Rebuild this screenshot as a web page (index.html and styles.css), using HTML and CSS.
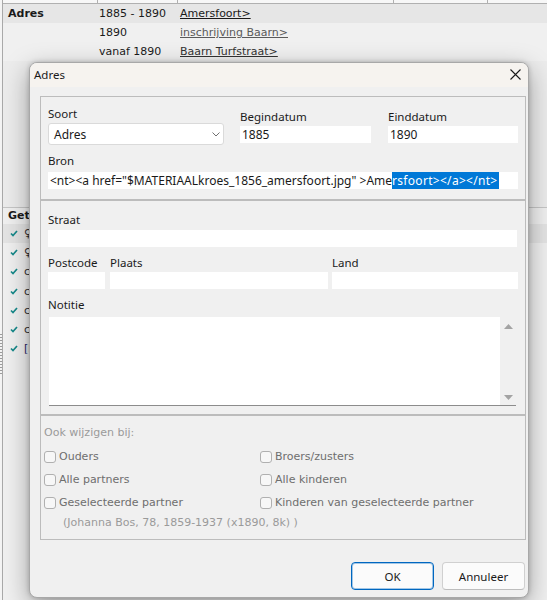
FILE: index.html
```html
<!DOCTYPE html>
<html>
<head>
<meta charset="utf-8">
<title>Adres</title>
<link rel="stylesheet" href="styles.css">
</head>
<body>
<div class="grip"><i></i></div>
<div class="app">
  <div class="hdr"><span class="hc h1"></span><span class="hc h2"></span><span class="hc h3"></span><span class="hc h4"></span></div>
  <div class="row sel"><span class="c1 b">Adres</span><span class="c2">1885 - 1890</span><span class="c3"><span class="lk">Amersfoort&gt;</span></span></div>
  <div class="row"><span class="c1"></span><span class="c2">1890</span><span class="c3"><span class="lk grey">inschrijving Baarn&gt;</span></span></div>
  <div class="row"><span class="c1"></span><span class="c2">vanaf 1890</span><span class="c3"><span class="lk mid">Baarn Turfstraat&gt;</span></span></div>
  <div class="gap"></div>
  <div class="sect">Get</div>
  <div class="list">
    <div class="li first"><svg class="ck" width="8" height="7" viewBox="0 0 8 7"><path d="M1 3.5 L3 5.5 L7 1" fill="none" stroke="#16898a" stroke-width="1.7"/></svg><span class="g">♀</span></div>
    <div class="li"><svg class="ck" width="8" height="7" viewBox="0 0 8 7"><path d="M1 3.5 L3 5.5 L7 1" fill="none" stroke="#16898a" stroke-width="1.7"/></svg><span class="g">♀</span></div>
    <div class="li"><svg class="ck" width="8" height="7" viewBox="0 0 8 7"><path d="M1 3.5 L3 5.5 L7 1" fill="none" stroke="#16898a" stroke-width="1.7"/></svg><span class="g">c</span></div>
    <div class="li"><svg class="ck" width="8" height="7" viewBox="0 0 8 7"><path d="M1 3.5 L3 5.5 L7 1" fill="none" stroke="#16898a" stroke-width="1.7"/></svg><span class="g">c</span></div>
    <div class="li"><svg class="ck" width="8" height="7" viewBox="0 0 8 7"><path d="M1 3.5 L3 5.5 L7 1" fill="none" stroke="#16898a" stroke-width="1.7"/></svg><span class="g">c</span></div>
    <div class="li"><svg class="ck" width="8" height="7" viewBox="0 0 8 7"><path d="M1 3.5 L3 5.5 L7 1" fill="none" stroke="#16898a" stroke-width="1.7"/></svg><span class="g">c</span></div>
    <div class="li"><svg class="ck" width="8" height="7" viewBox="0 0 8 7"><path d="M1 3.5 L3 5.5 L7 1" fill="none" stroke="#16898a" stroke-width="1.7"/></svg><span class="g br">[l</span></div>
  </div>
</div>

<div class="dlg">
  <div class="tbar">
    <span class="ttl">Adres</span>
    <svg class="x" width="11" height="11" viewBox="0 0 11 11"><path d="M0.5 0.5 L10.5 10.5 M10.5 0.5 L0.5 10.5" stroke="#1a1a1a" stroke-width="1.1"/></svg>
  </div>
  <div class="dbody">
    <div class="box b1">
      <div class="r1">
        <div class="fld soort">
          <div class="lbl">Soort</div>
          <div class="combo"><span>Adres</span><svg width="8" height="5" viewBox="0 0 8 5"><path d="M0.5 0.5 L4 4 L7.5 0.5" fill="none" stroke="#707070" stroke-width="1"/></svg></div>
        </div>
        <div class="fld date">
          <div class="lbl">Begindatum</div>
          <div class="inp">1885</div>
        </div>
        <div class="fld date d2">
          <div class="lbl">Einddatum</div>
          <div class="inp">1890</div>
        </div>
      </div>
      <div class="lbl bron-l">Bron</div>
      <div class="inp bron">&lt;nt&gt;&lt;a href="$MATERIAALkroes_1856_amersfoort.jpg" &gt;Ame<span class="hl">rsfoort&gt;&lt;/a&gt;&lt;/nt&gt;</span></div>
    </div>

    <div class="box b2">
      <div class="lbl">Straat</div>
      <div class="inp straat"></div>
      <div class="r2">
        <div class="fld pc"><div class="lbl">Postcode</div><div class="inp"></div></div>
        <div class="fld pl"><div class="lbl">Plaats</div><div class="inp"></div></div>
        <div class="fld ld"><div class="lbl">Land</div><div class="inp"></div></div>
      </div>
      <div class="lbl not-l">Notitie</div>
      <div class="memo">
        <div class="memo-txt"></div>
        <div class="sb">
          <svg width="9" height="5" viewBox="0 0 9 5"><path d="M0 5 L4.5 0 L9 5 Z" fill="#a3a3a3"/></svg>
          <svg width="9" height="5" viewBox="0 0 9 5"><path d="M0 0 L4.5 5 L9 0 Z" fill="#a3a3a3"/></svg>
        </div>
      </div>
    </div>

    <div class="box b3">
      <div class="ook">Ook wijzigen bij:</div>
      <div class="cbs">
        <div class="cbr"><span class="cb"></span>Ouders</div>
        <div class="cbr"><span class="cb"></span>Broers/zusters</div>
        <div class="cbr"><span class="cb"></span>Alle partners</div>
        <div class="cbr"><span class="cb"></span>Alle kinderen</div>
        <div class="cbr"><span class="cb"></span>Geselecteerde partner</div>
        <div class="cbr"><span class="cb"></span>Kinderen van geselecteerde partner</div>
      </div>
      <div class="joh">(Johanna Bos, 78, 1859-1937 (x1890, 8k) )</div>
    </div>
  </div>
  <div class="btns">
    <div class="btn ok">OK</div>
    <div class="btn">Annuleer</div>
  </div>
</div>
</body>
</html>
```

FILE: styles.css
```css
* { box-sizing: border-box; }
html, body { margin: 0; padding: 0; }
body {
  width: 547px;
  height: 600px;
  overflow: hidden;
  position: relative;
  display: flex;
  background: #f0f0f0;
  font-family: "DejaVu Sans", sans-serif;
  font-size: 11px;
  color: #1a1a1a;
}

/* background window */
.grip { width: 2px; flex: none; padding-top: 334px; background: #f4f4f4; }
.grip i {
  display: block;
  width: 2px;
  height: 40px;
  background: repeating-linear-gradient(#9c9c9c 0 1px, transparent 1px 3px);
}
.app { flex: 1; border-left: 1px solid #a9a9a9; display: flex; flex-direction: column; background: #f0f0f0; }
.hdr { display: flex; height: 4px; border-bottom: 1px solid #b0b0b0; background: #f7f7f7; flex: none; }
.hc { border-right: 1px solid #b0b0b0; flex: none; }
.h1 { width: 95px; }
.h2 { width: 80px; }
.h3 { width: 216px; }
.h4 { width: 94px; }
.row { display: flex; align-items: center; height: 19px; flex: none; white-space: nowrap; }
.row.sel { background: #e6e6e6; }
.c1 { width: 95px; padding-left: 5px; flex: none; }
.c2 { width: 80px; padding-left: 1px; flex: none; }
.c3 { padding-left: 2px; }
.b { font-weight: bold; }
.lk { text-decoration: underline; color: #1a1a1a; }
.lk.grey { color: #5a5a5a; }
.lk.mid { color: #333; }
.gap { height: 146px; flex: none; background: #ececec; }
.sect {
  height: 17px;
  flex: none;
  border-top: 1px solid #c6c6c6;
  font-weight: bold;
  padding-left: 5px;
  line-height: 16px;
  white-space: nowrap;
}
.list { display: flex; flex-direction: column; }
.li { height: 19.2px; display: flex; align-items: center; padding-left: 7px; white-space: nowrap; }
.li.first { background: #e4e4e4; }
.ck { flex: none; margin-right: 6px; }
.g { font-size: 11px; color: #333; }
.g.br { color: #2a2a6a; }

/* dialog */
.dlg {
  position: absolute;
  left: 29px;
  top: 62px;
  width: 500px;
  height: 536px;
  background: #f0f0f0;
  border: 1px solid #a8a8a8;
  border-radius: 8px;
  box-shadow: 0 8px 26px rgba(0,0,0,.34), 0 0 5px rgba(0,0,0,.2);
  display: flex;
  flex-direction: column;
  overflow: hidden;
  font-family: "Noto Sans", sans-serif;
  font-size: 11.5px;
  color: #1a1a1a;
}
.tbar {
  height: 24px;
  flex: none;
  background: #f6f3ef;
  display: flex;
  align-items: center;
  justify-content: space-between;
  padding: 0 7px 2px 4px;
}
.ttl { font-size: 11.5px; }
.dbody { padding: 9px 2px 0 10px; flex: none; }
.box { border: 1px solid #bcbcbc; }
.b1 { height: 104px; padding: 9px 7px 0 7px; }
.b2 { height: 215px; padding: 11px 7px 0 7px; }
.b3 { height: 125px; padding: 9px 0 0 3px; }
.lbl { height: 15px; line-height: 15px; white-space: nowrap; }
.r1 { display: flex; align-items: flex-start; }
.soort { width: 176px; }
.combo {
  margin-top: 2px;
  height: 22px;
  background: #fff;
  border: 1px solid #dadada;
  border-radius: 3px;
  display: flex;
  align-items: center;
  justify-content: space-between;
  padding: 0 3px 0 5px;
  font-size: 12px;
}
.date { width: 131px; margin-left: 16px; padding-top: 3px; }
.date.d2 { width: 130px; margin-left: 17px; }
.inp {
  margin-top: 2px;
  height: 17px;
  line-height: 17px;
  background: #fff;
  padding-left: 2px;
  white-space: nowrap;
  overflow: hidden;
  font-size: 12px;
}
.bron-l { margin-top: 8px; }
.inp.bron { margin-top: 4px; }
.hl { background: #0078d7; color: #fff; letter-spacing: 0.3px; padding-right: 1px; }
.inp.straat { margin-top: 3px; width: 469px; }
.r2 { display: flex; margin-top: 8px; }
.pc { width: 57px; }
.pl { width: 218px; margin-left: 5px; }
.ld { width: 186px; margin-left: 4px; }
.not-l { margin-top: 8px; }
.memo {
  margin: 5px 0 0 1px;
  width: 467px;
  height: 89px;
  background: #fff;
  border-bottom: 1px solid #8c8c8c;
  display: flex;
}
.memo-txt { flex: 1; }
.sb {
  width: 16px;
  background: #f0f0f0;
  display: flex;
  flex-direction: column;
  justify-content: space-between;
  align-items: center;
  padding: 7px 0 5px;
}
.ook {
  font-family: "DejaVu Sans", sans-serif;
  font-size: 11px;
  height: 16px;
  line-height: 16px;
  color: #9a9a9a;
}
.cbs {
  margin-top: 4px;
  display: grid;
  grid-template-columns: 216px auto;
  grid-auto-rows: 23px;
}
.cbr {
  display: flex;
  align-items: center;
  font-family: "DejaVu Sans", sans-serif;
  font-size: 11px;
  color: #6e6e6e;
  white-space: nowrap;
}
.cb {
  width: 12px;
  height: 12px;
  border: 1px solid #b0b0b0;
  border-radius: 3px;
  background: #f7f7f7;
  margin-right: 3px;
  flex: none;
}
.joh {
  margin-top: 1px;
  padding-left: 19px;
  height: 16px;
  line-height: 16px;
  font-family: "DejaVu Sans", sans-serif;
  font-size: 11px;
  color: #9a9a9a;
  white-space: nowrap;
}
.btns {
  margin-top: 22px;
  display: flex;
  justify-content: flex-end;
  gap: 8px;
  padding-right: 3px;
}
.btn {
  width: 83px;
  height: 28px;
  display: flex;
  align-items: center;
  justify-content: center;
  background: #fbfbfb;
  border: 1px solid #d0d0d0;
  border-bottom-color: #bdbdbd;
  border-radius: 4px;
  font-size: 11.5px;
}
.btn.ok {
  border: 1px solid #0067c0;
  box-shadow: inset 0 0 0 1px rgba(0,103,192,.35);
}
```
